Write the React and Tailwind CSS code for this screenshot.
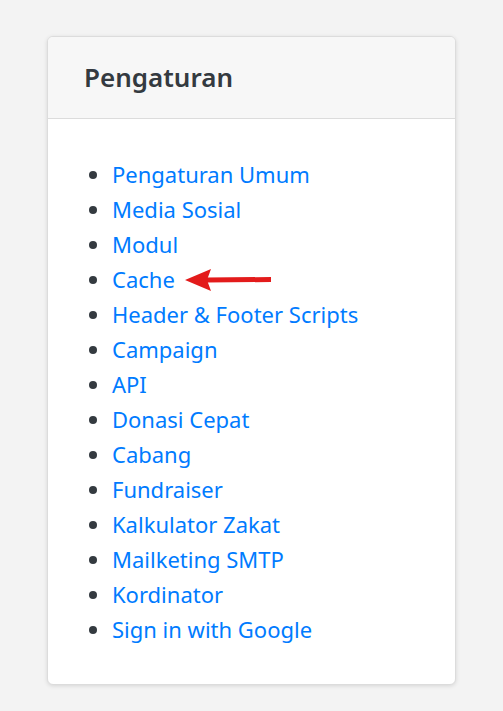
import React from "react";

const ITEMS = [
  "Pengaturan Umum",
  "Media Sosial",
  "Modul",
  "Cache",
  "Header & Footer Scripts",
  "Campaign",
  "API",
  "Donasi Cepat",
  "Cabang",
  "Fundraiser",
  "Kalkulator Zakat",
  "Mailketing SMTP",
  "Kordinator",
  "Sign in with Google",
];

const Arrow = () => (
  <svg
    width="86"
    height="26"
    viewBox="0 0 86 26"
    className="absolute left-[calc(100%+10px)] top-1/2 -translate-y-1/2"
  >
    <path d="M22 10.5 L86 10 L86 15 L22 15.5 Z" fill="#e31b1b" />
    <path d="M0 13 L26 2 L22 13 L26 24 Z" fill="#e31b1b" />
  </svg>
);

export default function App() {
  return (
    <div
      className="min-h-[711px] bg-[#f3f3f3] pt-[36px] px-[47px]"
      style={{ fontFamily: '"Noto Sans", "Open Sans", sans-serif' }}
    >
      <div className="bg-white border border-[#dcdcdc] rounded-[6px] shadow-[0_1px_4px_rgba(0,0,0,0.12)] overflow-hidden">
        <div className="bg-[#f7f7f7] border-b border-[#dcdcdc] h-[82px] flex items-center pl-[36px]">
          <h2 className="text-[26px] font-semibold text-[#343a40]">Pengaturan</h2>
        </div>
        <ul className="list-disc pl-[64px] pt-[38px] pb-[37px] text-[22px] leading-[35px] marker:text-[#343a40]">
          {ITEMS.map((item) => (
            <li key={item}>
              <span className="relative inline-block">
                <a href="#" className="text-[#007bff]">
                  {item}
                </a>
                {item === "Cache" && <Arrow />}
              </span>
            </li>
          ))}
        </ul>
      </div>
    </div>
  );
}
